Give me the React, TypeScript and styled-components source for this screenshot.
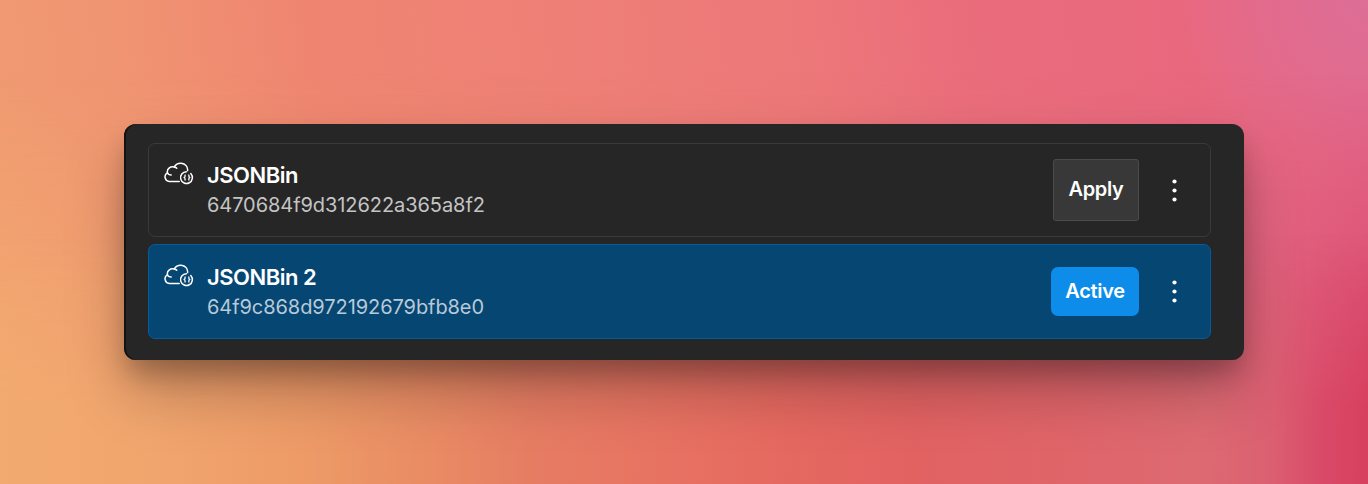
import React from 'react';
import styled, { createGlobalStyle, css } from 'styled-components';

const GlobalStyle = createGlobalStyle`
  *, *::before, *::after { box-sizing: border-box; }
  body {
    margin: 0;
    font-family: Inter, "Liberation Sans", sans-serif;
    -webkit-font-smoothing: antialiased;
  }
`;

const Backdrop = styled.main`
  position: relative;
  isolation: isolate;
  width: 100%;
  min-height: 484px;
  height: 100vh;
  padding: 124px;
  overflow: hidden;
  background:
    radial-gradient(circle at 100% 0, #de6e96 0, rgba(222, 110, 150, 0) 190px),
    linear-gradient(82deg, #f09c72 0%, #f09572 12%, #ef8571 26%, #ee7f77 44%, #ed7879 60%, #ea6d7c 71%, #e9687d 86%, #e4688a 100%);

  &::before,
  &::after {
    content: '';
    position: absolute;
    inset: 0;
    z-index: -1;
  }

  &::before {
    background: linear-gradient(90deg, #f2a470 0%, #f09b70 12%, #ec8a6c 32%, #e97b70 50%, #e67078 72%, #e26680 90%, #dc5276 100%);
    mask-image: linear-gradient(180deg, transparent 15%, #000 62%);
  }

  &::after {
    background: linear-gradient(91deg, #f2aa70 0%, #f1a56e 12%, #ed9a67 23%, #e98b64 32%, #e67d63 39%, #e77362 48%, #e56860 58%, #e26262 67%, #df656a 79%, #dd6a72 88%, #db5f71 93%, #d94a68 96.5%, #d7405e 100%);
    mask-image: linear-gradient(180deg, transparent 48%, #000 84%);
  }
`;

const Panel = styled.section`
  display: flex;
  flex-direction: column;
  gap: 7px;
  height: 236px;
  padding: 19px 33px 21px 24px;
  border-radius: 12px;
  background: #262626;
  box-shadow:
    inset 2px 0 0 #131313,
    0 16px 26px -4px rgba(0, 0, 0, 0.24),
    0 32px 60px -2px rgba(0, 0, 0, 0.26);
`;

const Row = styled.article<{ $active: boolean }>`
  display: flex;
  align-items: flex-start;
  height: ${p => (p.$active ? 95 : 94)}px;
  padding: 0 31px 0 15px;
  border: 1px solid ${p => (p.$active ? '#045c9f' : '#3a3a3a')};
  border-radius: 7px;
  background: ${p => (p.$active ? '#064673' : 'transparent')};
`;

const ProviderIcon = styled.svg<{ $active: boolean }>`
  flex: none;
  width: 30px;
  height: 24px;
  margin: ${p => (p.$active ? 18.5 : 18)}px 13px 0 0;
  color: #fff;
`;

const Details = styled.div<{ $active: boolean }>`
  flex: 1;
  padding-top: ${p => (p.$active ? 17 : 16)}px;
`;

const Name = styled.h2`
  margin: 0;
  color: #fff;
  font-size: 22px;
  font-weight: 600;
  line-height: 30px;
  letter-spacing: -0.48px;
`;

const BinId = styled.p<{ $active: boolean }>`
  margin: 0;
  color: ${p => (p.$active ? '#b8cad8' : '#c4c4c4')};
  font-size: 20px;
  line-height: 30px;
  letter-spacing: -0.07px;
`;

const Actions = styled.div<{ $active: boolean }>`
  display: flex;
  align-items: center;
  height: ${p => (p.$active ? 93 : 92)}px;
  gap: 32px;
`;

const StatusButton = styled.button<{ $active: boolean }>`
  padding: 0 0 2px;
  color: #fff;
  font: 600 20px/24px Inter, "Liberation Sans", sans-serif;
  letter-spacing: -0.3px;
  ${p =>
    p.$active
      ? css`
          width: 88px;
          height: 49px;
          border: 0;
          border-radius: 7px;
          background: #0d8de9;
        `
      : css`
          width: 86px;
          height: 62px;
          margin-bottom: 1px;
          border: 1px solid #4b4b4b;
          border-radius: 3px;
          background: #383838;
        `}
`;

const MenuButton = styled.button`
  display: grid;
  place-items: center;
  width: 8px;
  height: 28px;
  padding: 0;
  border: 0;
  background: none;
  color: #fff;
`;

function CloudJsonIcon({ active }: { active: boolean }) {
  return (
    <ProviderIcon $active={active} viewBox="0 0 30 24" fill="none" stroke="currentColor" strokeWidth="1.5" strokeLinecap="round" strokeLinejoin="round" aria-hidden="true">
      <path d="M15.2 19.4H5.3A4.6 4.6 0 0 1 3.4 10.8C2.7 6.8 6.2 4.2 10.2 5C11.8 2.3 14.4 1 17.2 1.2C21.4 1.6 24 4.8 23.6 8.6" />
      <path d="M3.4 10.8C4 12.2 5.4 13.1 7.2 13.1M10.2 5C11.2 5.2 12.2 5.6 12.8 6.3" />
      <path d="M26.8 11.6A5.9 5.9 0 1 1 22.4 9.7" />
      <path d="M21.8 13H21V14.8L20 15.5L21 16.2V18H21.8M24.1 13H24.9V14.8L25.9 15.5L24.9 16.2V18H24.1" strokeWidth="1.2" strokeLinecap="butt" />
    </ProviderIcon>
  );
}

function MoreIcon({ active }: { active: boolean }) {
  const middle = active ? 13.5 : 14.5;
  return (
    <svg width="8" height="28" viewBox="0 0 8 28" fill="currentColor" aria-hidden="true">
      <circle cx="3.5" cy={middle - 9} r="2.1" />
      <circle cx="3.5" cy={middle} r="2.1" />
      <circle cx="3.5" cy={middle + 9} r="2.1" />
    </svg>
  );
}

const bins = [
  { name: 'JSONBin', id: '6470684f9d312622a365a8f2', active: false },
  { name: 'JSONBin 2', id: '64f9c868d972192679bfb8e0', active: true },
];

export default function App() {
  return (
    <>
      <GlobalStyle />
      <Backdrop>
        <Panel>
          {bins.map(bin => (
            <Row key={bin.id} $active={bin.active}>
              <CloudJsonIcon active={bin.active} />
              <Details $active={bin.active}>
                <Name>{bin.name}</Name>
                <BinId $active={bin.active}>{bin.id}</BinId>
              </Details>
              <Actions $active={bin.active}>
                <StatusButton $active={bin.active}>{bin.active ? 'Active' : 'Apply'}</StatusButton>
                <MenuButton aria-label="More options">
                  <MoreIcon active={bin.active} />
                </MenuButton>
              </Actions>
            </Row>
          ))}
        </Panel>
      </Backdrop>
    </>
  );
}
